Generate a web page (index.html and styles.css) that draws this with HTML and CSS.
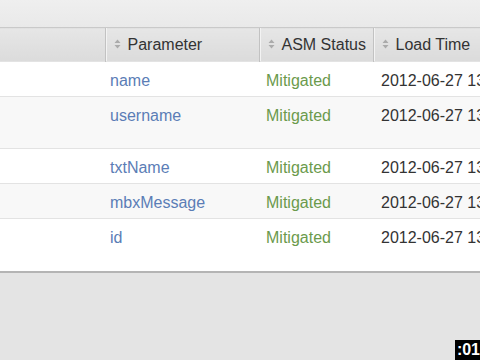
FILE: index.html
```html
<!DOCTYPE html>
<html>
<head>
<meta charset="utf-8">
<link rel="stylesheet" href="styles.css">
</head>
<body>
<div class="topbar"></div>
<div class="grid-wrap">
<table class="grid">
<colgroup>
<col class="c-first"><col class="c-param"><col class="c-status"><col class="c-time">
</colgroup>
<thead>
<tr>
<th></th>
<th><span class="sort"><svg width="7" height="10" viewBox="0 0 7 10"><path d="M3.5 0.5 L6.5 4 L0.5 4 Z M3.5 9.5 L6.5 6 L0.5 6 Z" fill="#ababab"/></svg></span>Parameter</th>
<th><span class="sort"><svg width="7" height="10" viewBox="0 0 7 10"><path d="M3.5 0.5 L6.5 4 L0.5 4 Z M3.5 9.5 L6.5 6 L0.5 6 Z" fill="#ababab"/></svg></span>ASM Status</th>
<th><span class="sort"><svg width="7" height="10" viewBox="0 0 7 10"><path d="M3.5 0.5 L6.5 4 L0.5 4 Z M3.5 9.5 L6.5 6 L0.5 6 Z" fill="#ababab"/></svg></span>Load Time</th>
</tr>
</thead>
<tbody>
<tr class="r-short"><td></td><td class="param">name</td><td class="status">Mitigated</td><td class="time">2012-06-27 13:40</td></tr>
<tr class="r-tall alt"><td></td><td class="param">username</td><td class="status">Mitigated</td><td class="time">2012-06-27 13:40</td></tr>
<tr class="r-short"><td></td><td class="param">txtName</td><td class="status">Mitigated</td><td class="time">2012-06-27 13:40</td></tr>
<tr class="r-short alt"><td></td><td class="param">mbxMessage</td><td class="status">Mitigated</td><td class="time">2012-06-27 13:40</td></tr>
<tr class="r-tall"><td></td><td class="param">id</td><td class="status">Mitigated</td><td class="time">2012-06-27 13:40</td></tr>
</tbody>
</table>
</div>
<div class="timer">:01</div>
</body>
</html>
```
FILE: styles.css
```css
html, body {
  margin: 0;
  padding: 0;
}
body {
  width: 480px;
  height: 360px;
  overflow: hidden;
  background: #e4e4e4;
  font-family: "Liberation Sans", Arial, sans-serif;
  position: relative;
}
.topbar {
  height: 27px;
  background: linear-gradient(#efefef, #e9e9e9);
}
.grid-wrap {
  width: 480px;
  overflow: hidden;
  border-bottom: 2px solid #b4b4b4;
  background: #fff;
}
.grid {
  width: 540px;
  table-layout: fixed;
  border-collapse: collapse;
  font-size: 16px;
}
.c-first { width: 105px; }
.c-param { width: 154px; }
.c-status { width: 114px; }
.c-time { width: 167px; }
.grid th {
  height: 34px;
  padding: 0 0 0 8px;
  text-align: left;
  font-weight: normal;
  color: #333;
  background: linear-gradient(#e6e6e6, #dbdbdb);
  border-top: 1px solid #c9c9c9;
  border-left: 1px solid #c2c2c2;
  box-shadow: inset 1px 0 #f3f3f3;
  white-space: nowrap;
  box-sizing: border-box;
}
.grid th:first-child {
  border-left: none;
  box-shadow: none;
}
.sort {
  display: inline-block;
  width: 14px;
  vertical-align: middle;
  margin-top: -3px;
}
.sort svg { display: block; }
.grid td {
  vertical-align: top;
  padding: 9px 0 0 5px;
  line-height: 20px;
  white-space: nowrap;
  border-top: 1px solid #e3e3e3;
  box-sizing: border-box;
}
.r-short td { height: 35px; }
.r-tall td { height: 52px; }
.alt td { background: #f8f8f8; }
.param { color: #5b7db6; }
.status { color: #6b9a4c; padding-left: 7px !important; }
.time { color: #333; padding-left: 8px !important; }
.timer {
  position: absolute;
  right: 0;
  bottom: 0;
  width: 25px;
  height: 20px;
  background: #000;
  color: #fff;
  font-weight: bold;
  font-size: 16px;
  line-height: 20px;
  text-align: right;
}
```
